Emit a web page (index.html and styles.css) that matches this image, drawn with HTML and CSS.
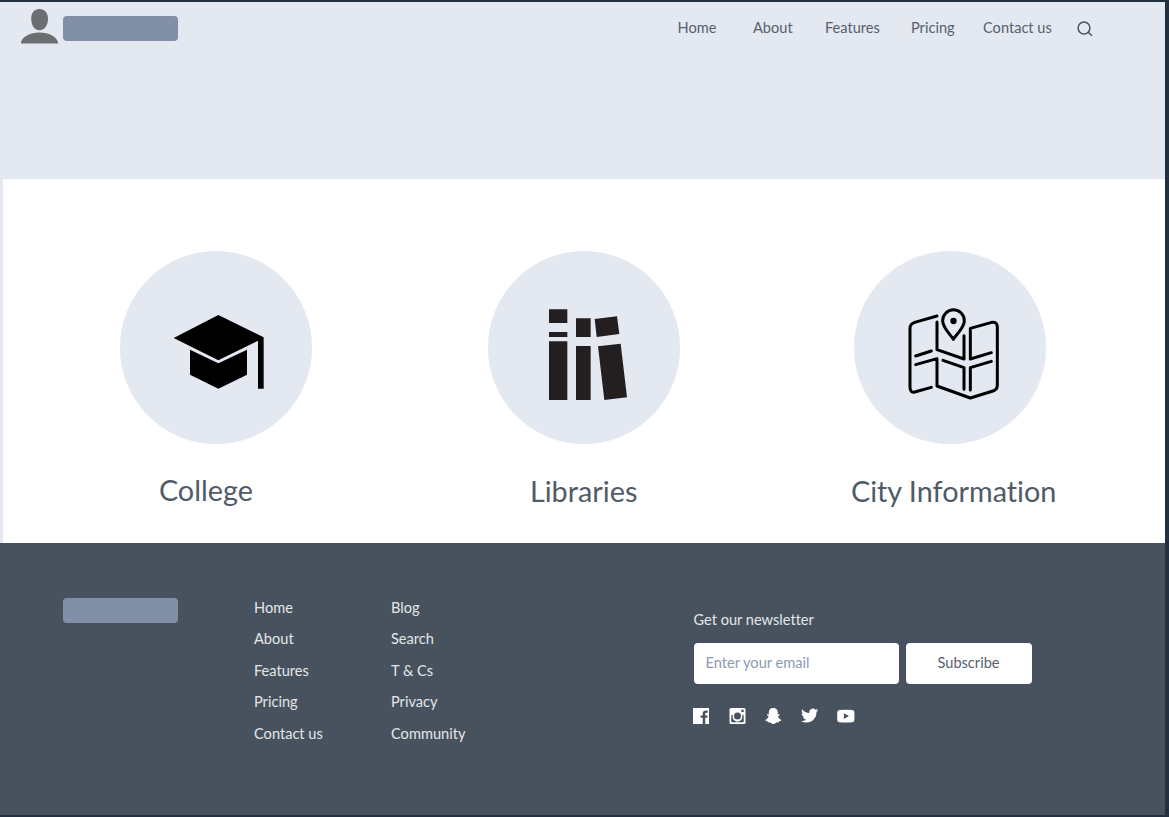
FILE: index.html
```html
<!DOCTYPE html>
<html lang="en">
<head>
<meta charset="utf-8">
<title>City Guide</title>
<link rel="stylesheet" href="styles.css">
</head>
<body>
<div class="page">
  <header class="header">
    <svg class="avatar" viewBox="0 0 37 35" fill="#6d6e71"><path d="M18.500 0C23.800 0 27 4 27 9.500C27 16 24 21.300 18.500 21.300S10.200 16 10.200 9.500C10.200 4 13.200 0 18.500 0ZM0 34.500V33C2 27.500 9 23.600 18.500 23.600S35 27.500 37 33V34.500Z"/></svg>
    <div class="logo"></div>
    <nav class="nav">
      <a>Home</a><a>About</a><a>Features</a><a>Pricing</a><a>Contact us</a>
      <svg class="search" viewBox="0 0 16 16" fill="none" stroke="#48525e" stroke-width="1.500"><circle cx="7" cy="7" r="5.900"/><path d="M11.200 11.200L15 14.800"/></svg>
    </nav>
  </header>

  <main class="cards">
    <section class="card">
      <div class="disc">
        <svg viewBox="30 33 576 576"><path d="M325 225L461 292V446H444V302L325 361L191 294ZM240 329L325 370L411 329V404L325 446L240 404Z"/></svg>
      </div>
      <h2 class="title title-college">College</h2>
    </section>
    <section class="card">
      <div class="disc">
        <svg viewBox="24 33 576 576" fill="#231f20"><path d="M207 208H262V249H207ZM207 276H262V291H207ZM207 304H262V480H207ZM288 235H332V291H288ZM288 318H332V480H288ZM344 237L411 229L418 282L350 291ZM354 319L422 311L441 472L373 480Z"/></svg>
      </div>
      <h2 class="title title-libraries">Libraries</h2>
    </section>
    <section class="card">
      <div class="disc">
        <svg viewBox="-107 -118 576 576" fill="none" stroke="#000" stroke-width="9" stroke-linecap="round" stroke-linejoin="round"><path d="M142 77L75 96Q61 101 61 114V290Q61 308 75 305L125 291M142 95V178L223 206V136M78 197L125 182M78 223L142 205V287L242 323L310 302Q323 298 323 284V110Q323 94 306 96L242 114V206L305 187M160 210L223 232V297M242 299V232L305 213M191 147C184 134 159 113 159 91A32.500 32.500 0 0 1 224 91C224 113 198 134 191 147Z"/><circle cx="191.500" cy="92" r="9.500" fill="#000" stroke="none"/></svg>
      </div>
      <h2 class="title title-city">City Information</h2>
    </section>
  </main>

  <footer class="footer">
    <div class="logo"></div>
    <ul class="links links-main"><li>Home</li><li>About</li><li>Features</li><li>Pricing</li><li>Contact us</li></ul>
    <ul class="links links-more"><li>Blog</li><li>Search</li><li>T &amp; Cs</li><li>Privacy</li><li>Community</li></ul>
    <div class="newsletter">
      <p class="label">Get our newsletter</p>
      <form class="form">
        <input class="email" type="email" placeholder="Enter your email">
        <button class="subscribe" type="button">Subscribe</button>
      </form>
      <div class="social">
        <svg viewBox="0 0 18 18"><path fill-rule="evenodd" d="M1 1H17V17H13.200V10.800H15.300L15.600 8.400H13.200V7Q13.200 5.800 14.500 5.800H15.700V3.600Q10.700 2.900 10.700 6.800V8.400H8.600V10.800H10.700V17H1Z"/></svg>
        <svg viewBox="-.5 0 18 18"><path fill-rule="evenodd" d="M2.500 1H15.500Q17 1 17 2.500V15.500Q17 17 15.500 17H2.500Q1 17 1 15.500V2.500Q1 1 2.500 1ZM12.800 2.700V5H15.200V2.700ZM2.800 8V15.200H15.200V8H13.700A5 5 0 1 1 4.300 8ZM9 5.600A3.500 3.500 0 1 0 9 12.600A3.500 3.500 0 1 0 9 5.600Z"/></svg>
        <svg viewBox="-.3 0 18 18"><path d="M9 .9C12 .9 13.500 3 13.500 5.500L13.300 7.500L15 7.100L15.300 8.200L13.700 9.200C14.200 11 15.400 12.200 17 12.900L16.700 13.800L14.800 14.200L14.400 15.400L12.400 15.200C11.200 15.800 10.400 17.100 9 17.100S6.800 15.800 5.600 15.200L3.600 15.400L3.200 14.200L1.300 13.800L1 12.900C2.600 12.200 3.800 11 4.300 9.200L2.700 8.200L3 7.100L4.700 7.500L4.500 5.500C4.500 3 6 .9 9 .9Z"/></svg>
        <svg viewBox="-1.600 .5 25 25"><path d="M23.600 4.900c-.9.400-1.800.7-2.800.8 1-.6 1.800-1.600 2.100-2.700-.9.600-2 1-3.100 1.200A4.900 4.900 0 0 0 11.500 8.700C7.400 8.500 3.800 6.500 1.400 3.500c-1.300 2.200-.7 5.100 1.500 6.600-.8 0-1.600-.2-2.200-.6 0 2.300 1.600 4.400 3.900 4.900-.7.200-1.500.2-2.200.1.600 2 2.400 3.400 4.600 3.400A9.900 9.900 0 0 1-.2 20 14 14 0 0 0 7.300 22.100c9.100 0 14.300-7.700 14-14.600 1-.7 1.800-1.600 2.300-2.600z"/></svg>
        <svg class="video" viewBox="-.9 0 18 18"><path fill-rule="evenodd" d="M2.500 3Q9 2.500 15.500 3Q17.500 3.200 17.500 5.500V12.800Q17.500 15 15.500 15.200Q9 15.700 2.500 15.200Q.3 15 .3 12.800V5.500Q.3 3.200 2.500 3ZM7 6.200V11.900L12 9.100Z"/></svg>
      </div>
    </div>
  </footer>
</div>
</body>
</html>
```
FILE: styles.css
```css
* { box-sizing: border-box; }
body {
  margin: 0;
  background: #223040;
  font-family: Lato, "Liberation Sans", sans-serif;
  font-size: 14.6px;
  font-variant-ligatures: none;
  line-height: 20px;
  color: #56616d;
}
.page {
  height: 817px;
  padding: 2px 4px 2px 0;
  display: grid;
  grid-template-rows: 177px 364px 272px;
}
.header {
  background: #e4e8f1;
  display: flex;
  align-items: flex-start;
  padding: 7px 0 0 21px;
}
.avatar { width: 37px; height: 35px; }
.logo {
  width: 115px;
  height: 25px;
  border-radius: 4px;
  background: #8290a7;
}
.header .logo { margin: 7px 0 0 5px; }
.nav {
  display: grid;
  grid-template-columns: 75.5px 72px 86px 72px 94px 16px;
  margin: 9px 0 0 499.5px;
}
.search { width: 16px; height: 16px; margin-top: 2.5px; }
.cards {
  background: #fff;
  border-left: 3px solid #e4e8f1;
  display: grid;
  grid-template-columns: 367.5px 366px 230px;
  padding: 72px 0 0 117.4px;
}
.disc {
  width: 192px;
  height: 192.5px;
  border-radius: 50%;
  background: #e4e8f1;
}
.disc svg { display: block; width: 192px; height: 192px; }
.title {
  margin: 27.5px 0 0;
  font-size: 28.8px;
  line-height: 40px;
  font-weight: 400;
  white-space: nowrap;
  color: #505b68;
}
.title-college { margin: 26.5px 0 0 38.5px; }
.title-libraries { margin-left: 42px; }
.title-city { margin-left: -3px; }
.footer {
  background: #48525e;
  color: #e3e6e9;
  display: flex;
  align-items: flex-start;
  padding: 55px 0 0 63px;
}
.links {
  list-style: none;
  margin: 0;
  padding: 0;
  line-height: 31.4px;
}
.links-main { width: 137px; margin: -6px 0 0 76px; }
.links-more { width: 302px; margin-top: -6px; }
.newsletter { padding-top: 12px; }
.label { margin: 0 0 0 .5px; }
.form { display: flex; gap: 7px; margin: 13px 0 0 1px; }
.email, .subscribe {
  height: 41px;
  border: 0;
  border-radius: 4px;
  background: #fff;
  font: inherit;
  color: #56616d;
}
.email { width: 205px; padding: 0 0 3px 11.5px; }
.email::placeholder { color: #8c9ab3; opacity: 1; }
.subscribe { width: 126px; padding: 0 1px 2px 0; }
.social { display: flex; gap: 18px; margin: 23px 0 0 -1px; fill: #fff; }
.social svg { width: 18px; height: 18px; }
.social .video { overflow: visible; }
```
